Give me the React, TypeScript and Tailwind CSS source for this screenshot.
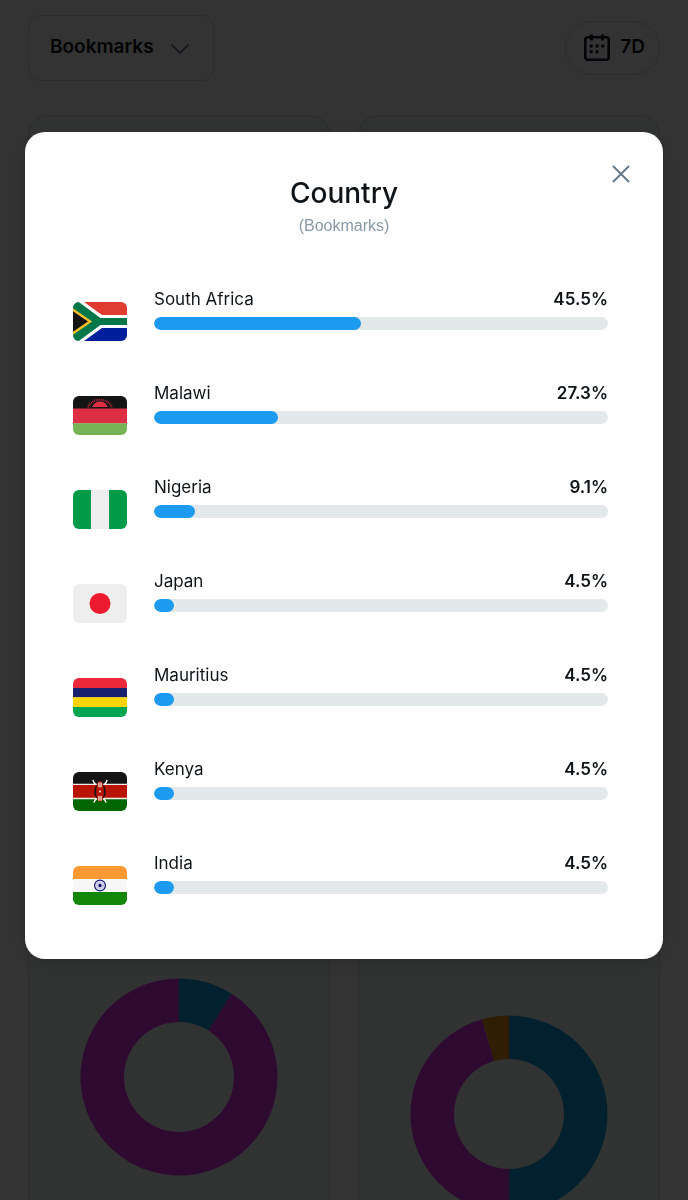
import type { ReactNode } from "react";

type Slice = { from: number; to: number; color: string };

const BLUE = "#0aa0e6";
const PURPLE = "#eb32f0";
const ORANGE = "#eb9614";

const flags: Record<string, ReactNode> = {
  za: (
    <>
      <path fill="#e03c31" d="M0 0h36v9H0z" />
      <path fill="#001f9c" d="M0 17h36v9H0z" />
      <path fill="#fff" d="M6 -1L19.3 8.7H36V17.3H19.3L6 27H-2V-1z" />
      <path fill="#007749" d="M2.500 -1L18.300 10.700H36V15.300H18.300L2.500 27H-2V-1z" />
      <path fill="#fff" d="M0 0L1 0L0 0z" />
      <path fill="#fcc02c" d="M0 4.200L12.800 13L0 21.800z" />
      <path fill="#141414" d="M0 6.200L10 13L0 19.800z" />
    </>
  ),
  mw: (
    <>
      <path fill="#141414" d="M0 0h36v8.700H0z" />
      <path fill="#dd2e44" d="M0 8.300h36v10H0z" />
      <path fill="#77b255" d="M0 18.200h36V26H0z" />
      <path fill="#dd2e44" d="M12.800 7.400a5.500 5.500 0 0 1 10.400 0z" />
      <path fill="none" stroke="#dd2e44" strokeWidth="1.500" strokeDasharray=".5 .7" d="M10.200 7.600a8 6.600 0 0 1 15.600 0" />
    </>
  ),
  ng: (
    <>
      <path fill="#009a49" d="M0 0h36v26H0z" />
      <path fill="#eee" d="M12 0h12v26H12z" />
    </>
  ),
  jp: (
    <>
      <path fill="#eee" d="M0 0h36v26H0z" />
      <circle fill="#ed1b2f" cx="18" cy="13" r="7" />
    </>
  ),
  mu: (
    <>
      <path fill="#ea2839" d="M0 0h36v6.700H0z" />
      <path fill="#1a206d" d="M0 6.600h36V13H0z" />
      <path fill="#ffd500" d="M0 12.900h36v6.600H0z" />
      <path fill="#00a551" d="M0 19.400h36V26H0z" />
    </>
  ),
  ke: (
    <>
      <path fill="#141414" d="M0 0h36v8.400H0z" />
      <path fill="#060" d="M0 17.800h36V26H0z" />
      <path fill="#eee" d="M0 7.800h36v10.400H0z" />
      <path fill="#b81400" d="M0 8.600h36v8.600H0z" />
      <path
        stroke="#fff"
        strokeWidth=".9"
        fill="none"
        d="M13.300 5.300c.2 1.600 1 2.400 2 3.200M22.700 5.300c-.2 1.600-1 2.400-2 3.200M14 20.400c.2-1.400 1-2.200 2-3M22 20.400c-.2-1.400-1-2.200-2-3"
      />
      <ellipse fill="#141414" cx="18" cy="13" rx="3.800" ry="5.600" />
      <ellipse fill="#b81400" cx="18" cy="13" rx="2.600" ry="7" />
      <path stroke="#fff" strokeWidth=".8" fill="none" d="M17.300 7v3.200M18.700 7v3.200M17.300 16v3.200M18.700 16v3.200" />
      <circle fill="#fff" cx="18" cy="13" r=".6" />
    </>
  ),
  in: (
    <>
      <path fill="#ff9933" d="M0 0h36v8.800H0z" />
      <path fill="#f7f7f7" d="M0 8.700h36v8.700H0z" />
      <path fill="#138808" d="M0 17.300h36V26H0z" />
      <circle fill="#e4e4f4" stroke="#16166e" strokeWidth=".8" cx="18" cy="13" r="3.600" />
      <circle fill="none" stroke="#9a9acc" strokeWidth="1.400" strokeDasharray=".3 .5" cx="18" cy="13" r="2" />
      <circle fill="#16166e" cx="18" cy="13" r="1.100" />
    </>
  ),
};

const countries = [
  { code: "za", name: "South Africa", share: 45.5 },
  { code: "mw", name: "Malawi", share: 27.3 },
  { code: "ng", name: "Nigeria", share: 9.1 },
  { code: "jp", name: "Japan", share: 4.5 },
  { code: "mu", name: "Mauritius", share: 4.5 },
  { code: "ke", name: "Kenya", share: 4.5 },
  { code: "in", name: "India", share: 4.5 },
];

const arc = ({ from, to }: Slice) => {
  const point = (t: number, r: number) => {
    const a = t * Math.PI * 2;
    return `${(99 + r * Math.sin(a)).toFixed(2)} ${(99 - r * Math.cos(a)).toFixed(2)}`;
  };
  const large = to - from > 0.5 ? 1 : 0;
  return `M${point(from, 98.5)}A98.5 98.5 0 ${large} 1 ${point(to, 98.5)}L${point(to, 55)}A55 55 0 ${large} 0 ${point(from, 55)}Z`;
};

const Donut = ({ slices }: { slices: Slice[] }) => (
  <svg viewBox="0 0 198 198" className="w-[198px] shrink-0" aria-hidden="true">
    {slices.map((slice) => (
      <path key={slice.color} d={arc(slice)} fill={slice.color} />
    ))}
  </svg>
);

const CalendarIcon = () => (
  <svg viewBox="0 0 26 27" className="w-[26px] shrink-0" fill="none" aria-hidden="true">
    <rect x="1.3" y="3.3" width="23.4" height="22.4" rx="2.5" stroke="#0f1419" strokeWidth="2.6" />
    <path d="M7.5 0.5v6M18.5 0.5v6" stroke="#0f1419" strokeWidth="3" />
    <path
      d="M5.700 10.500h3v3h-3zM11.500 10.500h3v3h-3zM17.300 10.500h3v3h-3zM5.700 16.200h3v3h-3zM11.500 16.200h3v3h-3z"
      fill="#0f1419"
    />
  </svg>
);

const Dashboard = () => (
  <main className="flex h-screen flex-col overflow-hidden bg-white px-7 pt-[15px]">
    <div className="mb-[34px] flex items-center justify-between">
      <div className="relative">
        <select
          aria-label="Metric"
          className="h-[66px] w-[186px] appearance-none rounded-xl border border-[#cfd9de] bg-white pb-[2px] pl-[21px] text-[19px] font-semibold text-[#0f1419]"
        >
          <option>Bookmarks</option>
        </select>
        <svg viewBox="0 0 20 12" className="pointer-events-none absolute top-7 right-6 w-5" fill="none" aria-hidden="true">
          <path d="M1.500 1.500L10 10l8.500-8.500" stroke="#536471" strokeWidth="1.600" />
        </svg>
      </div>
      <button className="flex h-[54px] items-center gap-[10px] rounded-full border border-[#cfd9de] pr-[14px] pb-[2px] pl-[18px] text-[19px] font-semibold text-[#0f1419]">
        <CalendarIcon />
        7D
      </button>
    </div>
    <div className="grid flex-1 grid-cols-2 gap-7">
      <section className="flex items-start justify-center rounded-t-[20px] border border-b-0 border-[#cfd9de] bg-[#f5fbf8] pt-[862px]">
        <Donut
          slices={[
            { from: 0, to: 0.09, color: BLUE },
            { from: 0.09, to: 1, color: PURPLE },
          ]}
        />
      </section>
      <section className="flex items-start justify-center rounded-t-[20px] border border-b-0 border-[#cfd9de] bg-[#f5fbf8] pt-[899px]">
        <Donut
          slices={[
            { from: 0, to: 0.5, color: BLUE },
            { from: 0.5, to: 0.956, color: PURPLE },
            { from: 0.956, to: 1, color: ORANGE },
          ]}
        />
      </section>
    </div>
  </main>
);

const CountryRow = ({ code, name, share }: (typeof countries)[number]) => (
  <li className="flex items-end gap-[27px]">
    <svg viewBox="0 0 36 26" className="h-[39px] w-[54px] shrink-0 rounded-md" aria-hidden="true">
      {flags[code]}
    </svg>
    <div className="flex-1 pb-[11px]">
      <div className="mb-[6px] flex justify-between text-[17px] leading-6 text-[#0f1419]">
        <span>{name}</span>
        <span className="font-semibold">{share}%</span>
      </div>
      <div
        role="progressbar"
        aria-label={name}
        aria-valuenow={share}
        className="h-[13px] overflow-hidden rounded-full bg-[#e3e8ea]"
      >
        <div className="h-full rounded-full bg-[#1d9bf0]" style={{ width: `${share}%` }} />
      </div>
    </div>
  </li>
);

export default function App() {
  return (
    <div className="font-['Inter',sans-serif]">
      <Dashboard />
      {/* Dimmed backdrop with the country breakdown on top */}
      <div className="fixed inset-0 bg-black/80 px-[25px] pt-[132px]">
        <div
          role="dialog"
          aria-labelledby="dialog-title"
          className="relative rounded-[20px] bg-white pt-10 pr-[55px] pb-[54px] pl-12 shadow-[0_4px_20px_rgba(0,0,0,0.15)]"
        >
          <button aria-label="Close" className="absolute top-[33px] right-[33px]">
            <svg viewBox="0 0 18 18" className="w-[18px]" fill="none" aria-hidden="true">
              <path d="M1 1l16 16M17 1L1 17" stroke="#657786" strokeWidth="1.900" />
            </svg>
          </button>
          <header className="mb-[49px] pl-[7px] text-center">
            <h1 id="dialog-title" className="text-[28px] leading-[42px] font-medium text-[#0f1419]">
              Country
            </h1>
            <p className="font-['Liberation_Sans',sans-serif] text-[16px] leading-6 text-[#8899a6]">(Bookmarks)</p>
          </header>
          <ul className="flex flex-col gap-10">
            {countries.map((country) => (
              <CountryRow key={country.code} {...country} />
            ))}
          </ul>
        </div>
      </div>
    </div>
  );
}
